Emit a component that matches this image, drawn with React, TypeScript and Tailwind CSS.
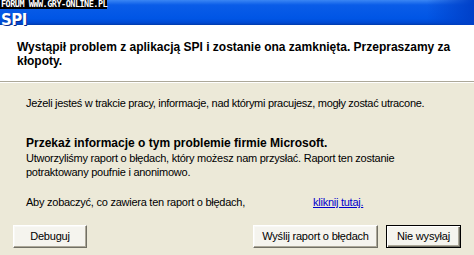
import React from 'react';

const XpButton: React.FC<{ label: string; width: string; isDefault?: boolean }> = ({ label, width, isDefault }) => (
  <button
    className={`${width} h-[23px] flex items-center justify-center bg-[#f5f4ee] text-[11px] tracking-[-0.2px] text-black border ${
      isDefault
        ? 'border-black shadow-[inset_1px_1px_0_#ffffff,inset_-1px_-1px_0_#716f64,inset_-2px_-2px_0_#aca899]'
        : 'border-t-[#ffffff] border-l-[#ffffff] border-b-[#716f64] border-r-[#716f64] shadow-[inset_-1px_-1px_0_#aca899,inset_1px_1px_0_#f9f9f6]'
    }`}
  >
    {label}
  </button>
);

export default function App() {
  return (
    <div className="w-[474px] h-[255px] flex flex-col bg-[#ece9d8] overflow-hidden font-['Liberation_Sans',Arial,sans-serif] text-black">
      {/* title bar */}
      <div className="relative h-[25px] shrink-0 bg-[linear-gradient(180deg,#3a86f4_0%,#0a5ce8_20%,#0055e5_75%,#0048d0_92%,#003aa8_100%)]">
        <div className="h-full bg-[linear-gradient(90deg,transparent_0%,transparent_90%,#0040c8_100%)] pl-[1px] pt-[8px]">
          <span className="text-white font-bold text-[15px] leading-[16px] font-['DejaVu_Sans',sans-serif] tracking-[-0.5px] [text-shadow:1px_1px_0_#0a2a8c]">
            SPI
          </span>
        </div>
        <div className="absolute top-0 left-0 w-[107px] h-[9px] bg-black text-white text-[8.5px] leading-[9px] font-bold font-['DejaVu_Sans_Mono',monospace] tracking-[-0.5px] pl-[1px] whitespace-nowrap">
          FORUM WWW.GRY-ONLINE.PL
        </div>
      </div>

      {/* header */}
      <div className="h-[56px] shrink-0 bg-white pl-[17px] pr-[12px] pt-[15px] text-[12px] leading-[14px] font-bold">
        Wystąpił problem z aplikacją SPI i zostanie ona zamknięta. Przepraszamy za kłopoty.
      </div>
      <div className="h-[1px] bg-[#aca899] shrink-0" />
      <div className="h-[1px] bg-white shrink-0" />

      {/* body */}
      <div className="flex flex-col px-[26px] pt-[13px] text-[11px] leading-[14px] tracking-[-0.25px]">
        <p className="whitespace-nowrap tracking-[-0.3px]">
          Jeżeli jesteś w trakcie pracy, informacje, nad którymi pracujesz, mogły zostać utracone.
        </p>
        <p className="mt-[26px] font-bold text-[12px] tracking-normal">
          Przekaż informacje o tym problemie firmie Microsoft.
        </p>
        <p className="mt-[1px] pr-[30px]">
          Utworzyliśmy raport o błędach, który możesz nam przysłać. Raport ten zostanie potraktowany poufnie i
          anonimowo.
        </p>
        <div className="mt-[16px] flex">
          <span className="w-[287px]">Aby zobaczyć, co zawiera ten raport o błędach,</span>
          <a className="text-[#0000cc] underline">kliknij tutaj.</a>
        </div>
      </div>

      {/* buttons */}
      <div className="mt-[16px] flex items-center px-[13px]">
        <XpButton label="Debuguj" width="w-[74px]" />
        <div className="ml-auto flex gap-[8px]">
          <XpButton label="Wyślij raport o błędach" width="w-[125px]" />
          <XpButton label="Nie wysyłaj" width="w-[75px]" isDefault />
        </div>
      </div>
    </div>
  );
}
